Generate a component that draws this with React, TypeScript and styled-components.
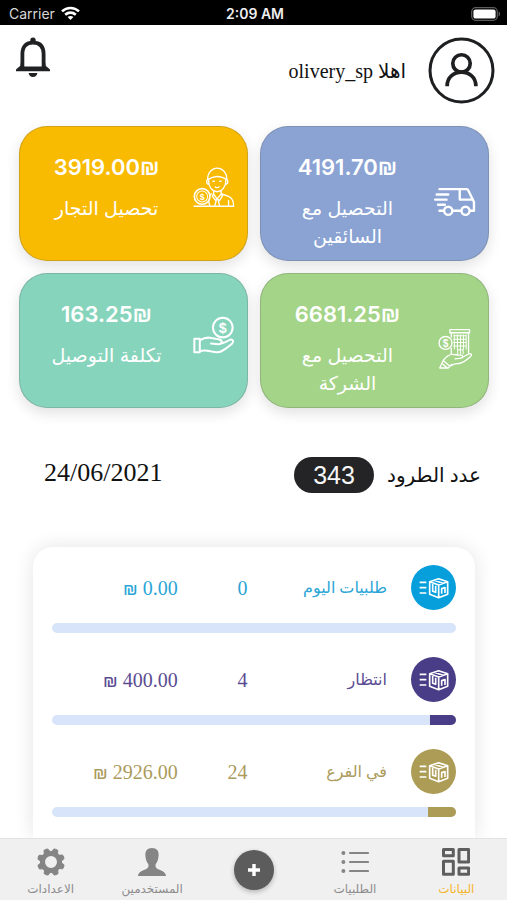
import React from "react";
import styled, { createGlobalStyle } from "styled-components";

const GlobalStyle = createGlobalStyle`
  * { box-sizing: border-box; }
  body { margin: 0; background: #fff; }
  button { border: 0; background: none; padding: 0; margin: 0; font: inherit; color: inherit; cursor: pointer; }
  svg { display: block; }
`;

const sans = `Inter, "Liberation Sans", "DejaVu Sans", sans-serif`;
const serif = `"Liberation Serif", "DejaVu Sans", serif`;

const Page = styled.div`
  display: flex;
  flex-direction: column;
  height: 100vh;
  overflow: hidden;
  direction: rtl;
  background: #fff;
  color: #111;
  font-family: ${serif};
`;

const StatusBar = styled.div`
  display: grid;
  grid-template-columns: 1fr auto 1fr;
  align-items: center;
  flex: none;
  height: 25px;
  padding: 2px 6px 0 9px;
  direction: ltr;
  background: #000;
  color: #fff;
  font: 400 14px/20px ${sans};
`;

const Carrier = styled.span`
  display: flex;
  align-items: center;
  gap: 6px;
  color: #d8d8d8;
`;

const Clock = styled.time`
  font-weight: 600;
  color: #eee;
`;

const Battery = styled.span`
  justify-self: end;
`;

const Content = styled.main`
  flex: 1;
  min-height: 0;
  display: flex;
  flex-direction: column;
  overflow-x: hidden;
  overflow-y: auto;
  scrollbar-width: none;
`;

const Header = styled.header`
  display: flex;
  align-items: flex-start;
  justify-content: space-between;
  flex: none;
  padding: 12px 12px 22px 16px;
`;

const User = styled.div`
  display: flex;
  align-items: center;
  gap: 22px;
  font-size: 20px;
  line-height: 28px;
`;

const Cards = styled.section`
  display: grid;
  grid-template-columns: 1fr 1fr;
  gap: 12px;
  flex: none;
  padding: 0 18px 0 19px;
`;

const Card = styled.article<{ $color: string }>`
  min-height: 135px;
  padding: 25px 12px 8px 0;
  border: 1px solid rgba(90, 90, 90, 0.25);
  border-radius: 28px;
  background: ${(p) => p.$color};
  box-shadow: 0 5px 14px rgba(0, 0, 0, 0.12);
  color: #fff;
`;

const CardBody = styled.div`
  display: flex;
  align-items: center;
`;

const CardText = styled.div`
  display: flex;
  flex: 1;
  flex-direction: column;
  align-items: center;
  gap: 12px;
  text-align: center;
`;

const CardAmount = styled.strong`
  direction: ltr;
  font: 600 22px/30px ${sans};
`;

const CardCurrency = styled.span`
  font-family: "Liberation Sans", sans-serif;
`;

const CardLabel = styled.span`
  max-width: 130px;
  font: 400 19px/28px ${sans};
`;

const Summary = styled.section`
  display: flex;
  align-items: center;
  justify-content: space-between;
  flex: none;
  padding: 49px 26px 54px 44px;
`;

const Count = styled.h2`
  display: flex;
  align-items: center;
  gap: 13px;
  margin: 0;
  font-size: 20px;
  font-weight: 400;
  line-height: 36px;
`;

const Pill = styled.span`
  min-width: 80px;
  border-radius: 18px;
  background: #242426;
  color: #f6f6f6;
  font: 400 25px/36px "Liberation Sans", sans-serif;
  text-align: center;
`;

const DateText = styled.time`
  padding-bottom: 4px;
  font-size: 26px;
  line-height: 32px;
`;

const Panel = styled.section`
  display: flex;
  flex: 1 0 auto;
  flex-direction: column;
  gap: 24px;
  margin: 0 32px 0 33px;
  padding: 18px 19px 22px;
  border-radius: 20px 20px 0 0;
  background: #fff;
  box-shadow: 0 0 20px rgba(0, 0, 0, 0.11);
`;

const Item = styled.div`
  display: flex;
  flex-direction: column;
  gap: 13px;
`;

const ItemRow = styled.div<{ $color: string }>`
  display: grid;
  grid-template-columns: auto 20fr 10fr 18fr;
  align-items: center;
  color: ${(p) => p.$color};
  font-size: 20px;
  line-height: 28px;
`;

const Badge = styled.span<{ $color: string }>`
  display: grid;
  place-items: center;
  width: 45px;
  height: 45px;
  margin-left: 24px;
  border-radius: 50%;
  background: ${(p) => p.$color};
`;

const ItemName = styled.span`
  font-size: 16px;
`;

const Amount = styled.bdi`
  direction: ltr;
  text-align: right;
`;

const Currency = styled.span`
  font: 400 18px/20px ${sans};
`;

const Track = styled.div`
  height: 10px;
  overflow: hidden;
  border-radius: 5px;
  background: #d7e4fa;
`;

const Fill = styled.div<{ $color: string }>`
  height: 100%;
  background: ${(p) => p.$color};
`;

const TabBar = styled.nav`
  display: grid;
  grid-template-columns: repeat(5, 1fr);
  flex: none;
  height: 62px;
  border-top: 1px solid #e3e2e3;
  background: #f1f0f1;
`;

const Tab = styled.a<{ $active?: boolean }>`
  display: flex;
  flex-direction: column;
  align-items: center;
  gap: 4px;
  padding-top: 9px;
  color: ${(p) => (p.$active ? "#f5b52c" : "#8c8c8c")};
  font: 400 12px/18px ${sans};
  text-decoration: none;
  svg { color: ${(p) => (p.$active ? "#5e5e5e" : "#858585")}; }
`;

const AddButton = styled.button`
  display: grid;
  place-items: center;
  place-self: center;
  width: 40px;
  height: 40px;
  border-radius: 50%;
  background: #5c5c5c;
  box-shadow: 0 2px 5px rgba(0, 0, 0, 0.25);
`;

const Coin = ({ x, y, size }: { x: number; y: number; size: number }) => (
  <text x={x} y={y + size * 0.36} fontSize={size} fontWeight="700" fontFamily="Liberation Sans, sans-serif" textAnchor="middle" fill="currentColor" stroke="none">$</text>
);

const strokes = { fill: "none", stroke: "currentColor", strokeLinecap: "round", strokeLinejoin: "round" } as const;

const WifiIcon = () => (
  <svg width="19" height="15" viewBox="0 0 19 15" fill="none" stroke="#fff" strokeWidth="2.6">
    <path d="M1 5.4C5.8.8 13.2.8 18 5.4" />
    <path d="M4.2 8.7c3-2.8 7.6-2.8 10.6 0" />
    <path d="M9.5 14 6.6 11c1.6-1.5 4.2-1.5 5.8 0z" fill="#fff" stroke="none" />
  </svg>
);

const BatteryIcon = () => (
  <svg width="30" height="14" viewBox="0 0 30 14">
    <rect x=".7" y=".7" width="25.6" height="12.6" rx="4" fill="none" stroke="#5c5c5c" strokeWidth="1.3" />
    <rect x="2.4" y="2.4" width="22.2" height="9.2" rx="2.2" fill="#fff" />
    <path d="M27.6 4.6c2 .6 2 4.2 0 4.8z" fill="#5c5c5c" />
  </svg>
);

const BellIcon = () => (
  <svg width="34" height="41" viewBox="0 0 34 41">
    <circle cx="17" cy="3.2" r="2.7" fill="#202123" />
    <path d="M6.4 30V17C6.4 9 10.5 5.600 17 5.600s10.600 3.400 10.600 11.400v13" fill="none" stroke="#202123" strokeWidth="3.8" />
    <path d="M4.600 26v2.600L0 32.400V34.200h34v-1.800L29.400 28.600V26l-3.600 3.600H8.200z" fill="#202123" />
    <path d="M12.6 36h8.800c-.5 2.600-2 4-4.400 4s-3.900-1.400-4.400-4z" fill="#202123" />
  </svg>
);

const AvatarIcon = () => (
  <svg width="67" height="67" viewBox="0 0 200 200" fill="none" stroke="#1e1f21" strokeWidth="9">
    <circle cx="100" cy="100" r="94" />
    <circle cx="100" cy="79" r="26" strokeWidth="11" />
    <path d="M57 147c0-56 86-56 86 0" strokeWidth="11" />
  </svg>
);

const TruckIcon = () => (
  <svg width="42" height="42" viewBox="552 182 124 124" {...strokes} strokeWidth="7">
    <path d="M568 206h60v30M560 222h34M555 237h34M564 252h20M568 270h13M606 270h27M658 270h12v-26l-17-35q-1-3-5-3h-20" />
    <path d="M629 237h38" strokeWidth="6" />
    <circle cx="594" cy="270" r="12" />
    <circle cx="645" cy="270" r="12" />
  </svg>
);

const MerchantIcon = () => (
  <svg width="42" height="42" viewBox="550 143 124 124" {...strokes} strokeWidth="4">
    <path d="M593 181c0-46 57-46 57 0M593 181c10-7 18-10 28-10s20 3 29 10M593 181c-4 0-4 13 4 13M650 181c4 0 4 13-4 13M596 183c0 18 10 33 25 33s26-15 26-33" />
    <path d="M609 185h4M629 185h4M616 202q5 4 11 0M611 213v10l10 14 12-14v-10M605 222l-6 4M611 223l-4 6 9 12 5-4 7 5 9-14-4-5M633 222l22 8c11 4 15 12 15 29H553M619 240l-5 19M624 240l5 19M655 242v17M600 258l-4-14" />
    <circle cx="577" cy="230" r="23" fill="#f9ba02" strokeWidth="5" />
    <circle cx="577" cy="230" r="16" strokeWidth="3" />
    <Coin x={577} y={230} size={26} />
  </svg>
);

const HandCoinIcon = () => (
  <svg width="42" height="42" viewBox="550 146 124 124" {...strokes} strokeWidth="6">
    <circle cx="638" cy="186" r="29" />
    <path d="M554 219h16v40h-16zM571 223c12-7 22-9 33-6 10 2 17 2 24 4 10 3 9 14-3 14l-22-2M634 233c10-2 17-6 25-11 8-3 13 5 6 12-10 9-20 16-31 22-9 5-20 3-29 1-11-3-21-5-34-2" />
    <Coin x={638} y={186} size={42} />
  </svg>
);

const BuildingHandIcon = () => (
  <svg width="42" height="42" viewBox="550 186 124 124" {...strokes} strokeWidth="4">
    <path d="M597 191h58v9h-58zM601 200v13M601 246v16M652 200v60" />
    <path d="M608 209h37M608 219h37M608 229h37M608 239h37M610 206v42M619 206v42M628 206v42M637 206v42M645 206v42M620 262v-12h16v12M628 250v12" strokeWidth="3" />
    <circle cx="584" cy="230" r="19" />
    <Coin x={584} y={230} size={30} />
    <path d="M577 282c9-11 17-18 27-18 9 0 16 3 26 2 6 0 7 8 0 9l-18 2M630 274l24-12c6-2 9 4 4 8-10 9-20 17-31 20-8 2-19 0-25 7M577 282l-10 22h25l10-10M577 282l20 17M573 290l15 13" />
  </svg>
);

const ParcelIcon = () => (
  <svg width="30" height="22" viewBox="0 0 90 64" {...strokes} stroke="#fff" strokeWidth="5" strokeLinecap="butt">
    <path d="M2 15h20M2 31h20M2 47h20" />
    <path d="M59 4l27 9v38l-27 10-27-10V13zM32 13l27 10 27-10M59 23v38M45 9l27 9" />
    <path d="M41 20v22l9 3V25M68 49V34l10-3v16" />
  </svg>
);

const DashboardIcon = () => (
  <svg width="28" height="28" viewBox="0 0 28 28" fill="none" stroke="currentColor" strokeWidth="3">
    <path d="M1.5 1.5h9.8v6.3H1.5zM1.5 13.3h9.8v13H1.5zM17 1.5h9.6v12.6H17zM17 20h9.6v6.3H17z" strokeLinejoin="round" />
  </svg>
);

const ListIcon = () => (
  <svg width="28" height="28" viewBox="0 0 28 28" fill="none" stroke="currentColor" strokeWidth="2.2" strokeLinecap="round">
    <path d="M9 5h18M9 14h18M9 23h18" />
    <g fill="currentColor" stroke="none">
      <circle cx="2.4" cy="5" r="2" />
      <circle cx="2.4" cy="14" r="2" />
      <circle cx="2.4" cy="23" r="2" />
    </g>
  </svg>
);

const PersonIcon = () => (
  <svg width="28" height="28" viewBox="0 0 28 28" fill="currentColor">
    <path d="M14 0c4.800 0 7 3 6.600 7.600-.2 3.700-1.200 6.600-3 8.700-.4 2.500.2 4 2.400 4.900 4.400 1.600 7.400 2.600 8 6.800H0c.6-4.200 3.600-5.200 8-6.800 2.200-.9 2.800-2.400 2.400-4.900-1.800-2.100-2.800-5-3-8.700C7 3 9.200 0 14 0z" />
  </svg>
);

const GearIcon = () => (
  <svg width="28" height="28" viewBox="0 0 28 28" fill="none" stroke="currentColor">
    <circle cx="14" cy="14" r="8.5" strokeWidth="5" />
    {[22, 67, 112, 157, 202, 247, 292, 337].map((angle) => (
      <path key={angle} d="M11 4 12 .8q2-.9 4 0L17 4z" transform={`rotate(${angle} 14 14)`} fill="currentColor" strokeWidth="1" strokeLinejoin="round" />
    ))}
  </svg>
);

const PlusIcon = () => (
  <svg width="14" height="14" viewBox="0 0 14 14" stroke="#fff" strokeWidth="3.4">
    <path d="M7 1v12M1 7h12" />
  </svg>
);

const cards = [
  { amount: "4191.70", label: "التحصيل مع السائقين", color: "#8aa3d3", icon: <TruckIcon /> },
  { amount: "3919.00", label: "تحصيل التجار", color: "#f9ba02", icon: <MerchantIcon /> },
  { amount: "6681.25", label: "التحصيل مع الشركة", color: "#a3d487", icon: <BuildingHandIcon /> },
  { amount: "163.25", label: "تكلفة التوصيل", color: "#87d4bc", icon: <HandCoinIcon /> },
];

const items = [
  { name: "طلبيات اليوم", count: 0, amount: "0.00", color: "#069fdc", text: "#2aa5d6", share: 0 },
  { name: "انتظار", count: 4, amount: "400.00", color: "#483d86", text: "#5a4b92", share: 6.5 },
  { name: "في الفرع", count: 24, amount: "2926.00", color: "#ad9c55", text: "#ab9b5c", share: 7 },
];

export default function App() {
  return (
    <>
      <GlobalStyle />
      <Page lang="ar">
        <StatusBar>
          <Carrier>Carrier <WifiIcon /></Carrier>
          <Clock>2:09 AM</Clock>
          <Battery><BatteryIcon /></Battery>
        </StatusBar>
        <Content>
          <Header>
            <User>
              <button type="button" aria-label="الحساب"><AvatarIcon /></button>
              <span>اهلا olivery_sp</span>
            </User>
            <button type="button" aria-label="الاشعارات"><BellIcon /></button>
          </Header>
          <Cards>
            {cards.map((card) => (
              <Card key={card.amount} $color={card.color}>
                <CardBody>
                  {card.icon}
                  <CardText>
                    <CardAmount>{card.amount}<CardCurrency>₪</CardCurrency></CardAmount>
                    <CardLabel>{card.label}</CardLabel>
                  </CardText>
                </CardBody>
              </Card>
            ))}
          </Cards>
          <Summary>
            <Count>عدد الطرود <Pill>343</Pill></Count>
            <DateText>24/06/2021</DateText>
          </Summary>
          <Panel>
            {items.map((item) => (
              <Item key={item.name}>
                <ItemRow $color={item.text}>
                  <Badge $color={item.color}><ParcelIcon /></Badge>
                  <ItemName>{item.name}</ItemName>
                  <span>{item.count}</span>
                  <Amount><Currency>₪</Currency> {item.amount}</Amount>
                </ItemRow>
                <Track role="progressbar" aria-label={item.name} aria-valuenow={item.share}>
                  <Fill $color={item.color} style={{ width: `${item.share}%` }} />
                </Track>
              </Item>
            ))}
          </Panel>
        </Content>
        <TabBar>
          <Tab href="#dashboard" $active><DashboardIcon />البيانات</Tab>
          <Tab href="#orders"><ListIcon />الطلبيات</Tab>
          <AddButton type="button" aria-label="اضافة"><PlusIcon /></AddButton>
          <Tab href="#users"><PersonIcon />المستخدمين</Tab>
          <Tab href="#settings"><GearIcon />الاعدادات</Tab>
        </TabBar>
      </Page>
    </>
  );
}
